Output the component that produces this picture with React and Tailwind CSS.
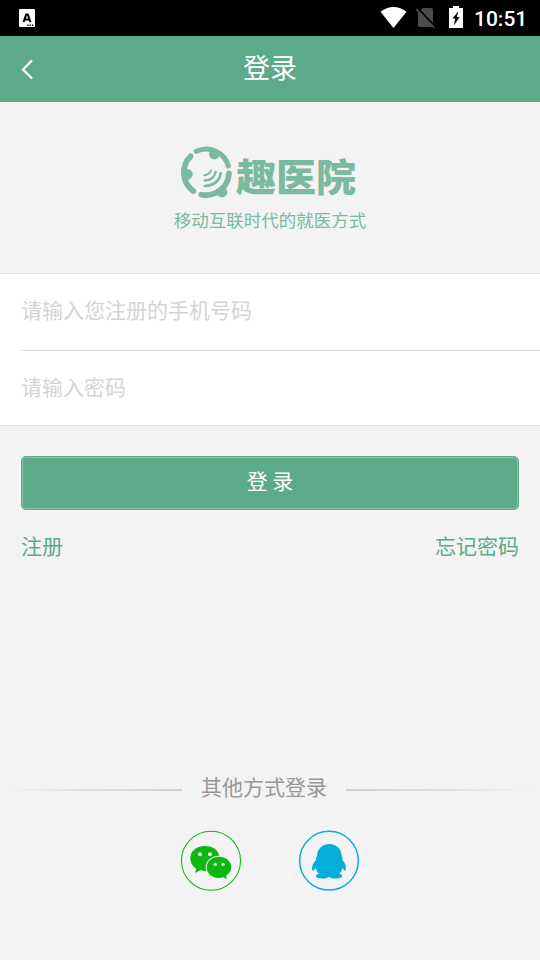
const StatusBar = () => (
	<div className="flex h-9 items-center bg-black text-white">
		<svg className="ml-[19px] h-[18px] w-4" viewBox="0 0 16 18">
			<rect width="16" height="18" rx="1" fill="#fff" />
			<path
				d="M4.6 13 L7.2 5.6 H8.8 L11.4 13 M5.8 10.4 H10.2"
				fill="none"
				stroke="#000"
				strokeWidth="2"
			/>
			<path d="M8.3 16.2 H15" stroke="#000" strokeWidth="1.4" strokeDasharray="1.3 1" />
		</svg>
		{/* wifi, sim and battery */}
		<svg className="ml-auto h-9 w-[90px]" viewBox="0 0 90 36">
			<path d="M0.5 11.8 C8 5.4 19 5.4 26.5 11.8 L13.5 28 Z" fill="#fff" />
			<path
				d="M43 8 H51.5 Q53 8 53 9.5 V25.5 Q53 27 51.5 27 H39.5 Q38 27 38 25.5 V13 Z"
				fill="#4d4d4d"
			/>
			<path d="M37.5 8 L55.5 27" stroke="#000" strokeWidth="2" />
			<path d="M36.3 9.2 L54.3 28" stroke="#4d4d4d" strokeWidth="1.7" />
			<path d="M69 8 H73 V6 H79 V8 H83 V28 H69 Z" fill="#fff" />
			<path d="M78.5 11 L72.5 18.5 H75.2 L73.8 25.5 L79.7 17 H76.8 Z" fill="#000" />
		</svg>
		<span className="ml-1 mr-3 w-[54px] pt-0.5 font-[Roboto,sans-serif] text-[21px] leading-none font-medium">
			10:51
		</span>
	</div>
);

const LogoMark = () => (
	<svg
		className="h-14 w-14"
		viewBox="39 27 168 168"
		fill="none"
		stroke="#7bb9a0"
		strokeLinecap="round"
	>
		<path d="M94 49 A69 69 0 0 1 190 93" strokeWidth="15" />
		<path d="M77 64 A68 68 0 0 0 85 168" strokeWidth="17" />
		<path d="M192 115 A69 69 0 0 1 109 179" strokeWidth="17" />
		<g fill="#7bb9a0" stroke="none">
			<circle cx="148" cy="57" r="16" />
			<circle cx="67" cy="118" r="16" />
			<circle cx="171" cy="171" r="16" />
		</g>
		<path d="M118 121 Q133 119 138 106" strokeWidth="6" />
		<path d="M119 137 Q146 135 152 111" strokeWidth="7" />
		<path d="M119 153 Q161 151 167 115" strokeWidth="8" />
	</svg>
);

const WechatIcon = () => (
	<svg className="h-[62px] w-[62px]" viewBox="30 30 186 186">
		<circle cx="123" cy="122" r="88.5" fill="none" stroke="#0cb80f" strokeWidth="3.2" />
		<path
			d="M104 78 C79 78 61 94 61 115 C61 128 68 139 79 146 L75 159 L91 151 C96 153 101 153 108 153 C150 151 162 105 132 85 C124 80 114 78 104 78 Z"
			fill="#0cb80f"
		/>
		<path
			d="M147 110 C126 110 110 124 110 142 C110 161 127 174 147 174 C152 174 156 173 160 172 L171 178 L168 167 C178 161 184 152 184 142 C184 124 168 110 147 110 Z"
			fill="#0cb80f"
			stroke="#f3f3f3"
			strokeWidth="6"
			paintOrder="stroke"
		/>
		<g fill="#f3f3f3">
			<circle cx="90" cy="103" r="6" />
			<circle cx="120" cy="103" r="6" />
			<circle cx="136" cy="133" r="5" />
			<circle cx="159" cy="133" r="5" />
		</g>
	</svg>
);

const QQIcon = () => (
	<svg className="h-[62px] w-[62px]" viewBox="384 30 186 186">
		<circle cx="477" cy="122" r="88" fill="none" stroke="#05aedd" strokeWidth="4.5" />
		<path
			d="M478 72 C456 72 441 87 441 108 C437 113 438 117 438 120 C429 129 424 142 427 151 C429 155 434 149 438 144 C439 152 442 157 447 161 C435 163 434 174 450 175 C461 177 472 175 477 170 C482 175 493 177 504 175 C520 173 519 164 508 161 C513 157 516 151 517 144 C521 149 526 155 527 150 C530 140 524 127 517 120 C517 116 518 113 515 108 C515 87 500 72 478 72 Z"
			fill="#05aedd"
		/>
	</svg>
);

export default function App() {
	return (
		<div className="flex h-[960px] w-[540px] flex-col overflow-hidden bg-[#f3f3f3] font-['Noto_Sans_CJK_SC',sans-serif] text-[21px]">
			<StatusBar />
			<header className="grid h-[66px] grid-cols-[54px_1fr_54px] items-center bg-[#5caa8a] text-white">
				<svg className="ml-5 h-6 w-4" viewBox="0 0 16 24">
					<path
						d="M11.5 4 L3 12.5 L11.5 21"
						fill="none"
						stroke="#fff"
						strokeWidth="2.2"
						strokeLinecap="round"
					/>
				</svg>
				<h1 className="pb-1.5 text-center text-[27px] leading-none">登录</h1>
			</header>

			<div className="flex h-[171px] flex-col items-center pt-[42px]">
				<div className="flex h-14 w-[184px] items-center">
					<LogoMark />
					<span className="ml-0.5 origin-bottom scale-y-95 pt-1 text-[40px] leading-none font-black whitespace-nowrap text-[#7bb9a0]">
						趣医院
					</span>
				</div>
				<p className="mt-2.5 text-[17.5px] leading-[20px] text-[#7bb9a0]">
					移动互联时代的就医方式
				</p>
			</div>

			<form className="h-[153px] border-y border-[#e3e3e3] bg-white pl-[21px]">
				<input
					className="block h-[76px] w-full pb-1.5 outline-none placeholder:text-[#d4d4d4]"
					placeholder="请输入您注册的手机号码"
				/>
				<input
					className="block h-[75px] w-full border-t border-[#e3e3e3] pb-1 outline-none placeholder:text-[#d4d4d4]"
					type="password"
					placeholder="请输入密码"
				/>
			</form>

			<div className="px-[21px] pt-[30px]">
				<button className="h-[54px] w-full rounded-[5px] border border-[#5caa8a] bg-[#5caa8a] pb-1 text-white inset-ring inset-ring-[#82c2a8]">
					登 录
				</button>
				<div className="mt-5 flex justify-between leading-[30px] text-[#5caa8a]">
					<a>注册</a>
					<a>忘记密码</a>
				</div>
			</div>

			<div className="mt-auto pb-[68px]">
				<div className="flex items-center justify-between">
					<div className="mt-2 ml-1.5 h-0.5 w-[176px] bg-linear-to-l from-[#cccccc] to-[#f3f3f3]" />
					<span className="leading-[30px] text-[#979797]">其他方式登录</span>
					<div className="mt-2 mr-2.5 h-0.5 w-[184px] bg-linear-to-r from-[#cccccc] to-[#f3f3f3]" />
				</div>
				<div className="mt-[29px] flex justify-center gap-14">
					<WechatIcon />
					<QQIcon />
				</div>
			</div>
		</div>
	);
}
